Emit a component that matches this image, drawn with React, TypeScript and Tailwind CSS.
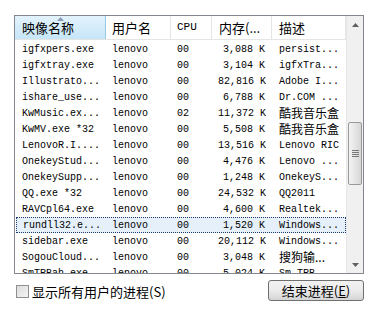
import React from "react";

const rows: [string, string, string, string, string, boolean?][] = [
  ["igfxpers.exe", "lenovo", "00", "3,088 K", "persist..."],
  ["igfxtray.exe", "lenovo", "00", "3,104 K", "igfxTra..."],
  ["Illustrato...", "lenovo", "00", "82,816 K", "Adobe I..."],
  ["ishare_use...", "lenovo", "00", "6,788 K", "Dr.COM ..."],
  ["KwMusic.ex...", "lenovo", "02", "11,372 K", "酷我音乐盒"],
  ["KwMV.exe *32", "lenovo", "00", "5,508 K", "酷我音乐盒"],
  ["LenovoR.I....", "lenovo", "00", "13,516 K", "Lenovo RIC"],
  ["OnekeyStud...", "lenovo", "00", "4,476 K", "Lenovo ..."],
  ["OnekeySupp...", "lenovo", "00", "1,248 K", "OnekeyS..."],
  ["QQ.exe *32", "lenovo", "00", "24,532 K", "QQ2011"],
  ["RAVCpl64.exe", "lenovo", "00", "4,600 K", "Realtek..."],
  ["rundll32.e...", "lenovo", "00", "1,520 K", "Windows...", true],
  ["sidebar.exe", "lenovo", "00", "20,112 K", "Windows..."],
  ["SogouCloud...", "lenovo", "00", "3,048 K", "搜狗输..."],
  ["SmTRBah.exe", "lenovo", "00", "5,024 K", "Sm TRB..."],
];

const mono = { fontFamily: '"Liberation Mono", "Noto Sans CJK SC", monospace' };
const cjk = { fontFamily: '"Noto Sans CJK SC", "Liberation Sans", sans-serif' };

function Cell({ text, w, right, pl = 6, pr = 0 }: { text: string; w: number; right?: boolean; pl?: number; pr?: number }) {
  const hasCjk = /[\u4e00-\u9fff]/.test(text);
  return (
    <div
      className={`shrink-0 overflow-hidden whitespace-nowrap ${right ? "text-right" : ""}`}
      style={{ width: w, paddingLeft: pl, paddingRight: pr, ...(hasCjk ? { ...cjk, fontSize: 12 } : {}) }}
    >
      {text}
    </div>
  );
}

export default function App() {
  return (
    <div className="w-[378px] h-[313px] bg-white relative overflow-hidden text-[#000]">
      <div className="pl-[14px] pt-[15px]">
        <div className="w-[350px] h-[259px] border border-[#828790] flex overflow-hidden">
          <div className="flex-1 flex flex-col overflow-hidden">
            {/* header */}
            <div className="h-[24px] flex shrink-0 border-b border-[#e5e5e5] text-[13px]" style={cjk}>
              <div className="relative w-[91px] shrink-0 flex items-center pl-[7px] bg-gradient-to-b from-[#e3f3fc] to-[#c6e6f8] border-r border-[#96c8e6]">
                <svg className="absolute left-[42px] top-[1px]" width="7" height="4" viewBox="0 0 7 4">
                  <path d="M3.5 0 L7 4 L0 4 Z" fill="#8a9bb0" />
                </svg>
                映像名称
              </div>
              <div className="w-[65px] shrink-0 flex items-center pl-[6px] border-r border-[#e5e5e5]">用户名</div>
              <div className="w-[41px] shrink-0 flex items-center pl-[6px] border-r border-[#e5e5e5] text-[11px]" style={mono}>CPU</div>
              <div className="w-[60px] shrink-0 flex items-center pl-[7px] border-r border-[#e5e5e5]">内存(...</div>
              <div className="w-[74px] shrink-0 flex items-center pl-[7px] border-r border-[#e5e5e5]">描述</div>
            </div>
            {/* rows */}
            <div className="flex flex-col pt-px text-[10px]" style={mono}>
              {rows.map((r, i) => (
                <div
                  key={i}
                  className={`h-[16px] flex items-center shrink-0 ${r[5] ? "bg-[#e6f0fa] outline outline-1 outline-dotted outline-[#1e3a6e] -outline-offset-1 ml-px w-[330px]" : ""}`}
                >
                  <Cell text={r[0]} w={r[5] ? 90 : 91} pl={7} />
                  <Cell text={r[1]} w={65} />
                  <Cell text={r[2]} w={41} />
                  <Cell text={r[3]} w={60} right pr={7} />
                  <Cell text={r[4]} w={74} pl={7} />
                </div>
              ))}
            </div>
          </div>
          {/* scrollbar */}
          <div className="w-[17px] shrink-0 bg-[#f0f0f0] border-l border-[#e8e8e8] flex flex-col">
            <div className="h-[17px] flex items-center justify-center">
              <svg width="7" height="4" viewBox="0 0 7 4"><path d="M3.5 0 L7 4 L0 4 Z" fill="#606060" /></svg>
            </div>
            <div className="h-[89px]" />
            <div className="h-[63px] mx-px rounded-[2px] border border-[#9a9a9a] bg-gradient-to-r from-[#f3f3f3] via-[#e6e6e6] to-[#d6d6d6] flex flex-col items-center justify-center gap-[1px]">
              <div className="w-[7px] h-px bg-[#777]" />
              <div className="w-[7px] h-px bg-[#777]" />
              <div className="w-[7px] h-px bg-[#777]" />
              <div className="w-[7px] h-px bg-[#777]" />
            </div>
            <div className="flex-1" />
            <div className="h-[17px] flex items-center justify-center">
              <svg width="7" height="4" viewBox="0 0 7 4"><path d="M0 0 L7 0 L3.5 4 Z" fill="#606060" /></svg>
            </div>
          </div>
        </div>
      </div>
      {/* bottom */}
      <div className="flex items-center justify-between pl-[16px] pr-[14px] mt-[6px]">
        <div className="flex items-center gap-[3px] mt-[2px]">
          <div className="w-[13px] h-[13px] border border-[#8e8f8f] bg-gradient-to-br from-[#dcdcdc] to-[#f6f6f6]" />
          <span className="text-[13px]" style={cjk}>显示所有用户的进程(S)</span>
        </div>
        <div
          className="w-[96px] h-[21px] rounded-[3px] border border-[#707070] bg-gradient-to-b from-[#f2f2f2] via-[#ebebeb] to-[#d5d5d5] flex items-center justify-center text-[13px]"
          style={cjk}
        >
          结束进程(<span className="underline">E</span>)
        </div>
      </div>
    </div>
  );
}
